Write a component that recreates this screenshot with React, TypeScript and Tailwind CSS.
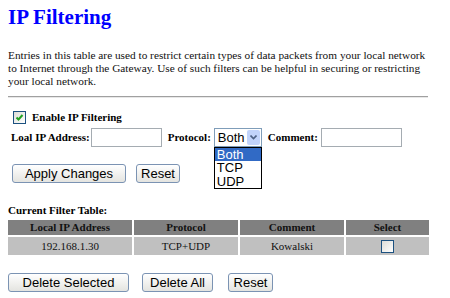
import React from "react";

const serif = { fontFamily: '"Liberation Serif", "Times New Roman", serif' };
const sans = { fontFamily: '"Liberation Sans", Arial, sans-serif' };

function Btn({ children, w }: { children: React.ReactNode; w: string }) {
  return (
    <button
      className={`${w} h-[19px] border border-[#7b93b3] rounded-[3px] bg-gradient-to-b from-[#ffffff] to-[#e4e4e0] text-[13px] leading-[17px] text-black text-center p-0 block`}
      style={sans}
    >
      {children}
    </button>
  );
}

function Check({ checked }: { checked?: boolean }) {
  return (
    <span className="flex w-[13px] h-[13px] border border-[#1c5180] bg-gradient-to-br from-[#dcdcd7] to-[#ffffff] items-center justify-center">
      {checked && (
        <svg width="9" height="9" viewBox="0 0 9 9">
          <path d="M1.5 4.5 L3.5 6.5 L7.5 2" stroke="#21a121" strokeWidth="2" fill="none" />
        </svg>
      )}
    </span>
  );
}

export default function App() {
  return (
    <div className="w-[450px] h-[298px] bg-white relative overflow-hidden text-black" style={serif}>
      <div className="pl-2">
        <h1 className="mt-[5px] h-[24px] text-[21px] leading-[24px] font-bold text-[#0000ff]">IP Filtering</h1>
        <p className="mt-[20px] w-[426px] text-[11.3px] leading-[13px] text-[#111]">
          Entries in this table are used to restrict certain types of data packets from your local network to Internet through the Gateway. Use of such filters can be helpful in securing or restricting your local network.
        </p>
        <div className="mt-[8px] w-[420px] h-[2px] border-t border-[#a0a0a0] border-b border-b-[#e8e8e8]" />
        <div className="mt-[12px] flex items-center h-[14px]">
          <span className="ml-[5px] flex"><Check checked /></span>
          <span className="ml-[6px] text-[11px] font-bold">Enable IP Filtering</span>
        </div>
        <div className="mt-[4px] flex items-center h-[19px] text-[11px] font-bold">
          <span className="ml-[3px]">Loal IP Address:</span>
          <span className="ml-[1px] w-[71px] h-[19px] border border-[#a5acb2] bg-white" />
          <span className="ml-[6px]">Protocol:</span>
          <span className="ml-[3px] relative w-[48px] h-[19px] border border-[#7f9db9] bg-white flex items-center">
            <span className="pl-[3px] text-[13px] font-normal leading-[15px] flex-1" style={sans}>Both</span>
            <span className="w-[13px] h-[15px] mr-[1px] rounded-[2px] bg-[#c1d3fb] flex items-center justify-center">
              <svg width="7" height="5" viewBox="0 0 7 5">
                <path d="M0.5 0.5 L3.5 3.5 L6.5 0.5" stroke="#4d6185" strokeWidth="1.6" fill="none" />
              </svg>
            </span>
            <div className="absolute left-[-1px] top-[18px] w-[48px] h-[42px] border border-black bg-white text-[13px] font-normal leading-[14px] z-10" style={sans}>
              <div className="bg-[#316ac5] text-white pl-[2px] h-[13px] leading-[13px]">Both</div>
              <div className="pl-[2px] h-[14px]">TCP</div>
              <div className="pl-[2px] h-[14px]">UDP</div>
            </div>
          </span>
          <span className="ml-[6px]">Comment:</span>
          <span className="ml-[3px] w-[81px] h-[19px] border border-[#a5acb2] bg-white" />
        </div>
        <div className="mt-[17px] flex items-center h-[19px]">
          <span className="ml-[4px] flex"><Btn w="w-[114px]">Apply Changes</Btn></span>
          <span className="ml-[10px] flex"><Btn w="w-[44px]">Reset</Btn></span>
        </div>
        <div className="mt-[21px] text-[11px] font-bold leading-[13px]">Current Filter Table:</div>
        <div className="mt-[3px] w-[421px] grid grid-cols-[124px_104px_104px_83px] gap-[2px] text-[11px] text-[#111]">
          <div className="bg-[#808080] h-[15px] leading-[15px] text-center font-bold">Local IP Address</div>
          <div className="bg-[#808080] h-[15px] leading-[15px] text-center font-bold">Protocol</div>
          <div className="bg-[#808080] h-[15px] leading-[15px] text-center font-bold">Comment</div>
          <div className="bg-[#808080] h-[15px] leading-[15px] text-center font-bold">Select</div>
          <div className="bg-[#c0c0c0] h-[18px] leading-[18px] text-center">192.168.1.30</div>
          <div className="bg-[#c0c0c0] h-[18px] leading-[18px] text-center">TCP+UDP</div>
          <div className="bg-[#c0c0c0] h-[18px] leading-[18px] text-center">Kowalski</div>
          <div className="bg-[#c0c0c0] h-[18px] flex items-center justify-center"><Check /></div>
        </div>
        <div className="mt-[18px] flex items-center h-[19px]">
          <span className="flex"><Btn w="w-[121px]">Delete Selected</Btn></span>
          <span className="ml-[13px] flex"><Btn w="w-[71px]">Delete All</Btn></span>
          <span className="ml-[15px] flex"><Btn w="w-[45px]">Reset</Btn></span>
        </div>
      </div>
    </div>
  );
}
